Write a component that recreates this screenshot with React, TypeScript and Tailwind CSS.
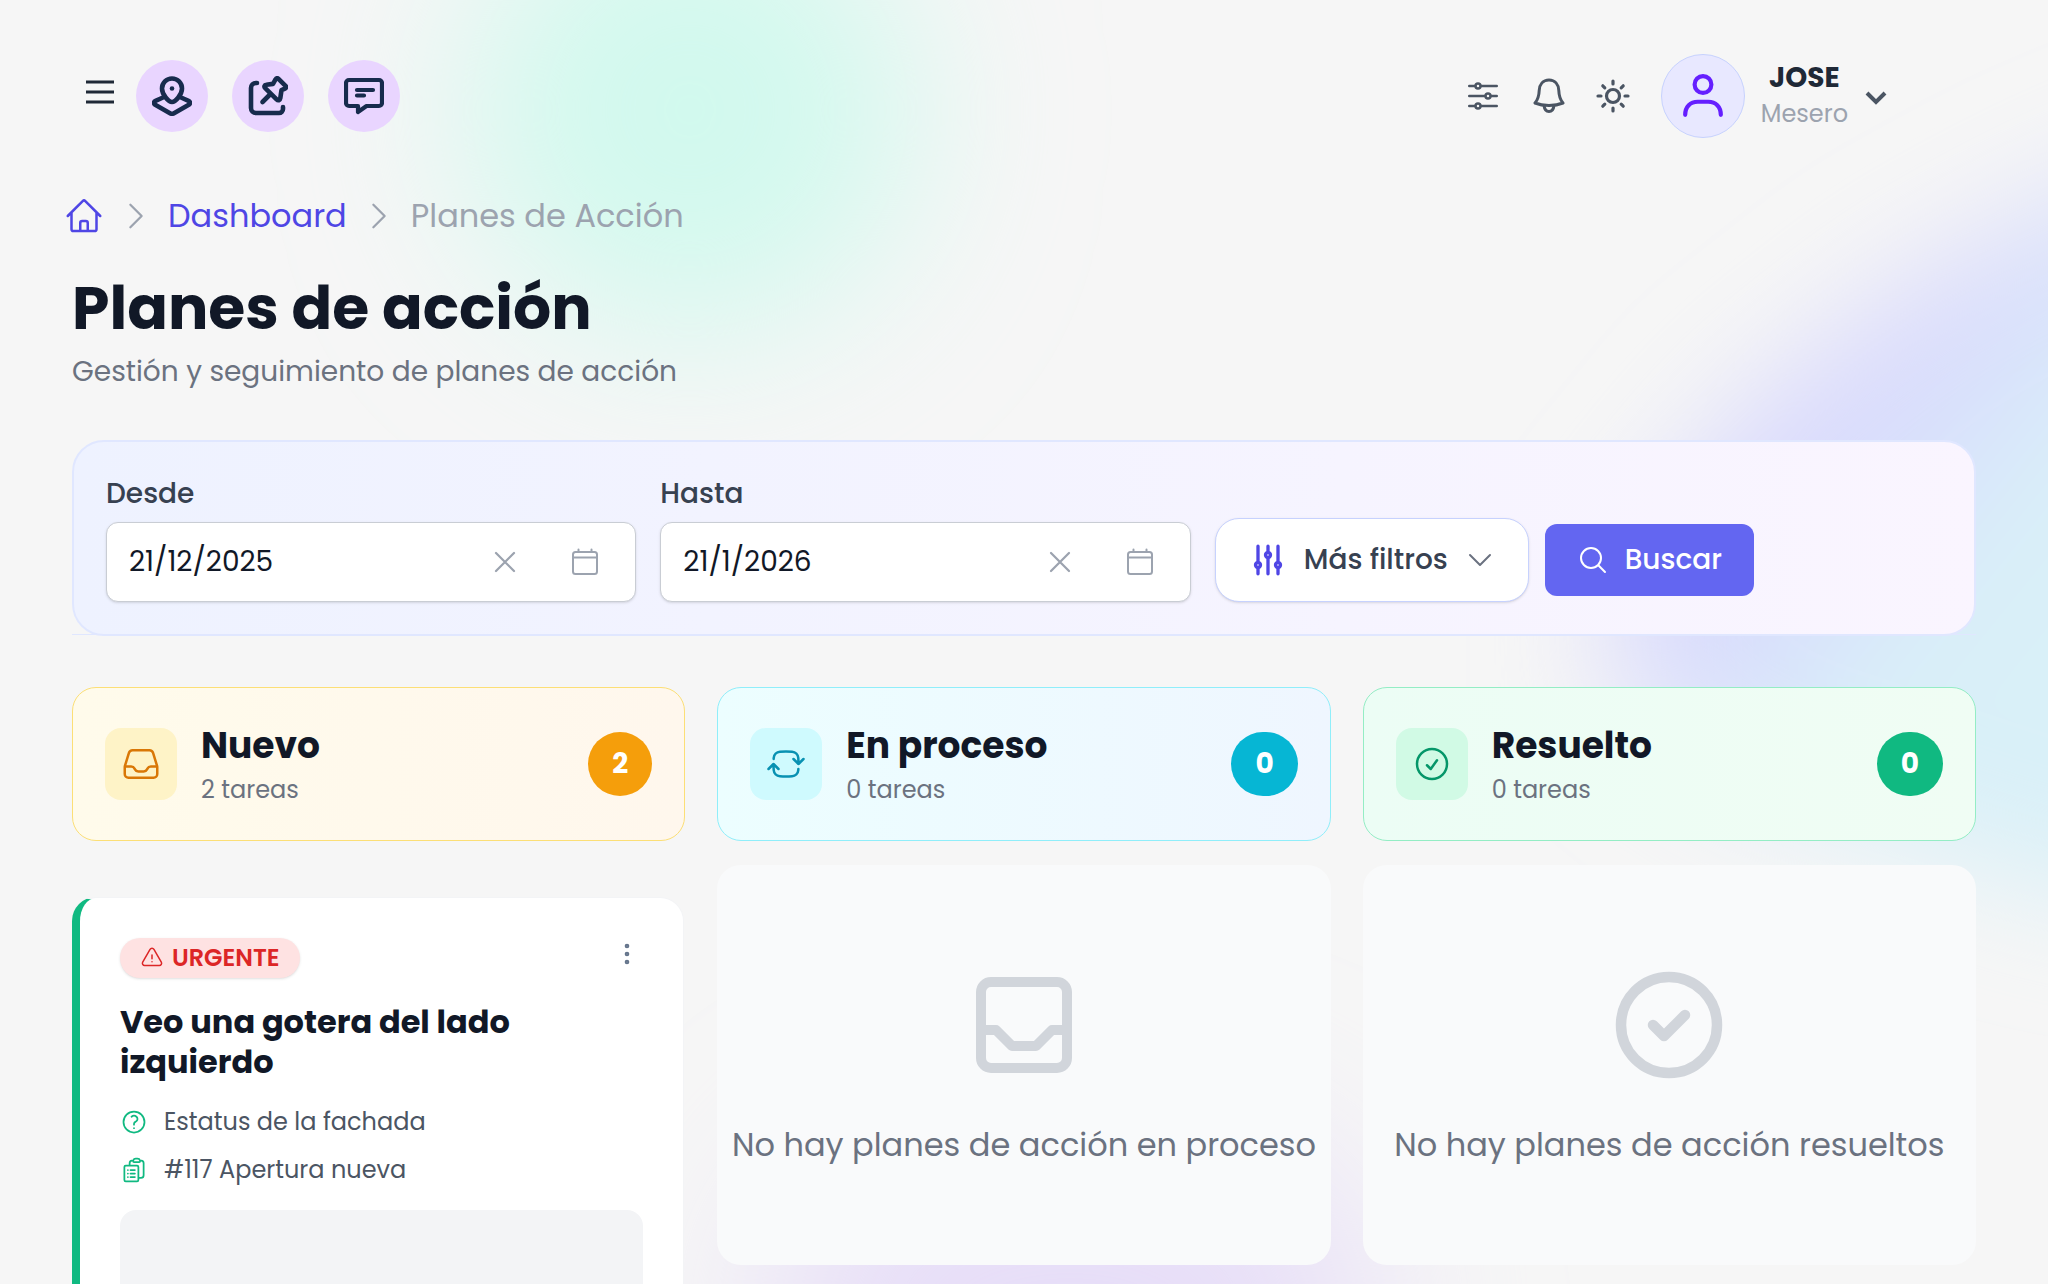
import React from 'react';
import {
    HiOutlineAdjustmentsHorizontal,
    HiOutlineAdjustmentsVertical,
    HiOutlineArrowPathRoundedSquare,
    HiOutlineCheckCircle,
    HiOutlineChevronDown,
    HiOutlineChevronRight,
    HiOutlineClipboardDocumentList,
    HiOutlineEllipsisVertical,
    HiOutlineExclamationTriangle,
    HiOutlineHome,
    HiOutlineInbox,
    HiOutlineMagnifyingGlass,
    HiOutlineQuestionMarkCircle,
    HiOutlineXMark,
} from 'react-icons/hi2';

type IconProps = { className?: string };

function MapPinIcon({ className }: IconProps) {
    return (
        <svg viewBox="0 0 40 40" fill="none" stroke="currentColor" strokeWidth="4.600" strokeLinecap="round" strokeLinejoin="round" className={className}>
            <path d="M20 26c-3.500 0-10-7.500-10-13.500a10 10 0 0 1 20 0c0 6-6.500 13.500-10 13.500z" />
            <circle cx="20" cy="12.500" r="2.300" fill="currentColor" stroke="none" />
            <path d="M11 21.500l-7.500 3.300c-1.800.8-2 2.900-.3 4L18 37.200a4 4 0 0 0 4 0l14.800-8.400c1.700-1.100 1.500-3.200-.3-4L29 21.500" />
        </svg>
    );
}

function PinNoteIcon({ className }: IconProps) {
    return (
        <svg viewBox="0 0 40 40" fill="none" stroke="currentColor" strokeWidth="4.600" strokeLinecap="round" strokeLinejoin="round" className={className}>
            <path d="M9 7H8a5 5 0 0 0-5 5v20a5 5 0 0 0 5 5h23a4 4 0 0 0 4-4v-2" />
            <path d="M30.500 2.800l7 7c1 1 .6 2.300-.6 2.800l-3.400 1.600-1.200 8c-.3 2.200-2.200 2.700-3.700 1.200L17.200 12.200c-1.400-1.400-.8-3.200 1.200-3.400l6.600-.9 2.700-4.700c.6-1.200 1.900-1.300 2.800-.4z" />
            <path d="M22 18.500l-7.500 7.500" />
        </svg>
    );
}

function MessageIcon({ className }: IconProps) {
    return (
        <svg viewBox="0 0 40 40" fill="none" stroke="currentColor" strokeWidth="4.200" strokeLinecap="round" strokeLinejoin="round" className={className}>
            <path d="M5 4h30a3 3 0 0 1 3 3v20a3 3 0 0 1-3 3H22.500L14 36v-6H5a3 3 0 0 1-3-3V7a3 3 0 0 1 3-3z" />
            <path d="M13 14h16M13 19.500h7" />
        </svg>
    );
}

function BellIcon({ className }: IconProps) {
    return (
        <svg viewBox="0 0 32 36" fill="none" stroke="currentColor" strokeWidth="3" strokeLinecap="round" strokeLinejoin="round" className={className}>
            <path d="M16 2c-6 0-9.500 4.500-9.800 10.500C6 19 5 21.500 2 25c8 3.300 20 3.300 28 0-3-3.500-4-6-4.200-12.500C25.500 6.500 22 2 16 2z" />
            <path d="M11 27.500c.5 4 2.500 6 5 6s4.500-2 5-6" />
        </svg>
    );
}

function SunIcon({ className }: IconProps) {
    return (
        <svg viewBox="0 0 36 36" fill="none" stroke="currentColor" strokeWidth="3.200" strokeLinecap="round" className={className}>
            <circle cx="18" cy="18" r="6.500" />
            <path d="M18 3v3M18 30v3M3 18h3M30 18h3M7.800 7.800l2 2M26.200 26.200l2 2M28.200 7.800l-2 2M9.800 26.200l-2 2" />
        </svg>
    );
}

function UserIcon({ className }: IconProps) {
    return (
        <svg viewBox="0 0 40 42" fill="none" stroke="currentColor" strokeWidth="4" strokeLinecap="round" className={className}>
            <circle cx="20" cy="10" r="8" />
            <path d="M3 39c0-8 5-12.500 12-12.500h10c7 0 12 4.500 12 12.500" />
        </svg>
    );
}

function CalendarIcon({ className }: IconProps) {
    return (
        <svg viewBox="0 0 28 28" fill="none" stroke="currentColor" strokeWidth="2" strokeLinecap="round" strokeLinejoin="round" className={className}>
            <rect x="2" y="4" width="24" height="22" rx="2.500" />
            <path d="M2 9.500h24M7.500 1.500V4M20.500 1.500V4" />
        </svg>
    );
}

function TrayIcon({ className }: IconProps) {
    return (
        <svg viewBox="0 0 96 96" fill="none" stroke="currentColor" strokeWidth="10" strokeLinejoin="round" className={className}>
            <rect x="5" y="5" width="86" height="86" rx="10" />
            <path d="M5 53h15l16 16h24l16-16h15" />
        </svg>
    );
}

function CheckRingIcon({ className }: IconProps) {
    return (
        <svg viewBox="0 0 108 108" fill="none" stroke="currentColor" strokeWidth="10.500" strokeLinecap="round" strokeLinejoin="round" className={className}>
            <circle cx="54" cy="54" r="48" />
            <path d="M38 54l11 11 21-21" />
        </svg>
    );
}

const shortcuts = [
    { label: 'Mapa', icon: MapPinIcon },
    { label: 'Fijar', icon: PinNoteIcon },
    { label: 'Mensajes', icon: MessageIcon },
];

const statuses = [
    {
        title: 'Nuevo',
        count: 2,
        icon: HiOutlineInbox,
        card: 'border-[#fcdf76] from-[#fffbeb] to-[#fff7ed]',
        box: 'bg-[#fef3c7] text-[#d97706]',
        badge: 'bg-[#f59e0b]',
    },
    {
        title: 'En proceso',
        count: 0,
        icon: HiOutlineArrowPathRoundedSquare,
        card: 'border-[#90eefa] from-[#ecfeff] to-[#eff6ff]',
        box: 'bg-[#cffafe] text-[#0891b2]',
        badge: 'bg-[#06b6d4]',
    },
    {
        title: 'Resuelto',
        count: 0,
        icon: HiOutlineCheckCircle,
        card: 'border-[#94edc5] from-[#ecfdf5] to-[#f0fdf4]',
        box: 'bg-[#d1fae5] text-[#059669]',
        badge: 'bg-[#10b981]',
    },
];

function StatusCard({ status }: { status: (typeof statuses)[number] }) {
    const Icon = status.icon;
    return (
        <div className={`flex items-center rounded-3xl border bg-gradient-to-r px-8 py-8.5 ${status.card}`}>
            <div className={`flex size-18 shrink-0 items-center justify-center rounded-2xl ${status.box}`}>
                <Icon className="size-10" />
            </div>
            <div className="ml-6 flex-1">
                <h2 className="text-4xl leading-12 font-bold text-[#111827]">{status.title}</h2>
                <p className="mt-1 text-2xl leading-8 text-[#6b7280]">{status.count} tareas</p>
            </div>
            <span className={`flex h-16 items-center justify-center rounded-full px-6 text-[28px] font-bold text-white ${status.badge}`}>
                {status.count}
            </span>
        </div>
    );
}

function DateField({ id, label, value }: { id: string; label: string; value: string }) {
    return (
        <div className="min-w-0 flex-1">
            <label htmlFor={id} className="mb-2 block text-[28px] leading-10 font-medium text-[#374151]">
                {label}
            </label>
            <div className="flex h-20 items-center rounded-xl border border-[#c9cdd4] bg-white pr-9 pl-5.5 text-[#9ca3af] shadow">
                <input id={id} type="text" defaultValue={value} className="min-w-0 flex-1 bg-transparent text-[28px] text-[#111827] outline-none" />
                <button type="button" aria-label={`Limpiar ${label}`} className="mr-12">
                    <HiOutlineXMark className="size-9" />
                </button>
                <button type="button" aria-label={`Calendario ${label}`}>
                    <CalendarIcon className="size-7" />
                </button>
            </div>
        </div>
    );
}

function EmptyColumn({ icon: Icon, text, size }: { icon: React.ComponentType<IconProps>; text: string; size: string }) {
    return (
        <div className="flex h-100 flex-col items-center rounded-3xl bg-[#f9fafb] pt-26">
            <div className="flex h-28 items-center text-[#d1d5db]">
                <Icon className={size} />
            </div>
            <p className="mt-10 text-[32px] leading-12 whitespace-nowrap text-[#6b7280]">{text}</p>
        </div>
    );
}

function TaskCard() {
    return (
        <article className="mt-8 mr-px rounded-3xl border border-l-8 border-[#f3f4f6] border-l-[#10b981] bg-white px-10 py-10">
            <div className="flex items-start justify-between">
                <span className="flex h-10 items-center gap-2 rounded-full bg-[#fee2e2] px-5 text-2xl font-semibold text-[#dc2626] shadow-sm">
                    <HiOutlineExclamationTriangle className="size-6" />
                    URGENTE
                </span>
                <button type="button" aria-label="Opciones" className="text-[#64748b]">
                    <HiOutlineEllipsisVertical className="size-8" strokeWidth={2} />
                </button>
            </div>
            <h3 className="mt-6 text-[32px] leading-10 font-bold text-[#111827]">Veo una gotera del lado izquierdo</h3>
            <div className="mt-6 space-y-4 text-2xl leading-8 text-[#4b5563]">
                <p className="flex items-center gap-4">
                    <HiOutlineQuestionMarkCircle className="size-7 text-[#10b981]" />
                    Estatus de la fachada
                </p>
                <p className="flex items-center gap-4">
                    <HiOutlineClipboardDocumentList className="size-7 text-[#10b981]" />
                    #117 Apertura nueva
                </p>
            </div>
            <div className="mt-6 h-80 rounded-2xl bg-[#f3f4f6]" />
        </article>
    );
}

function Backdrop() {
    return (
        <svg viewBox="0 0 2048 1284" preserveAspectRatio="none" aria-hidden="true" className="absolute inset-0 size-full">
            <defs>
                <filter id="soft" filterUnits="userSpaceOnUse" x="-200" y="-400" width="2800" height="2200">
                    <feGaussianBlur stdDeviation="85" />
                </filter>
                <filter id="softer" filterUnits="userSpaceOnUse" x="1200" y="-200" width="1400" height="1600">
                    <feGaussianBlur stdDeviation="60" />
                </filter>
                <linearGradient id="sky" gradientUnits="userSpaceOnUse" x1="1850" y1="430" x2="2010" y2="560">
                    <stop offset="0" stopColor="#d9d9fd" />
                    <stop offset="1" stopColor="#d9f0f8" />
                </linearGradient>
            </defs>
            <g filter="url(#soft)">
                <circle cx="690" cy="110" r="225" fill="#d2f9ee" />
                <ellipse cx="1070" cy="1310" rx="310" ry="200" fill="#e7def8" />
            </g>
            <path
                filter="url(#softer)"
                fill="url(#sky)"
                d="M2350 80L2048 205L1900 285L1740 410L1610 570L1610 690L1720 780L1900 840L2048 890L2350 940z"
            />
        </svg>
    );
}

export default function App() {
    return (
        <div className="relative h-screen overflow-hidden bg-[#f6f6f6] font-['Poppins','Inter',sans-serif]">
            <Backdrop />

            <div className="relative px-18 pt-13">
                {/* Header */}
                <header className="flex h-22 items-center justify-between pl-3">
                    <div className="flex items-center gap-6">
                        <button type="button" aria-label="Menú" className="-mr-1 text-[#1f2937]">
                            <svg viewBox="0 0 32 32" stroke="currentColor" strokeWidth="3" className="size-8">
                                <path d="M2 2h28M2 12h28M2 22h28" />
                            </svg>
                        </button>
                        {shortcuts.map(({ label, icon: Icon }) => (
                            <button key={label} type="button" aria-label={label} className="flex size-18 items-center justify-center rounded-full bg-[#e9d5ff] text-[#172b4d]">
                                <Icon className="size-10" />
                            </button>
                        ))}
                    </div>
                    <div className="mr-22 flex items-center gap-7.5 text-[#4b5563]">
                        <button type="button" aria-label="Ajustes">
                            <HiOutlineAdjustmentsHorizontal className="size-10" />
                        </button>
                        <button type="button" aria-label="Notificaciones">
                            <BellIcon className="h-9 w-8" />
                        </button>
                        <button type="button" aria-label="Tema">
                            <SunIcon className="size-9" />
                        </button>
                        <button type="button" className="flex items-center gap-4">
                            <span className="flex size-21 items-center justify-center rounded-full border border-[#c7d2fe] bg-[#e8e8ff] text-[#651fff]">
                                <UserIcon className="size-11" />
                            </span>
                            <span className="text-center">
                                <span className="block text-[28px] leading-9 font-bold text-[#1f2937]">JOSE</span>
                                <span className="block text-2xl leading-9 text-[#9ca3af]">Mesero</span>
                            </span>
                            <svg viewBox="0 0 24 24" fill="none" stroke="currentColor" strokeWidth="4" className="mt-1 size-6">
                                <path d="M3 7l9 9 9-9" />
                            </svg>
                        </button>
                    </div>
                </header>

                {/* Breadcrumb */}
                <nav aria-label="Breadcrumb" className="-ml-2 mt-13 flex h-12 items-center gap-3.5 text-[32px] text-[#9ca3af]">
                    <a href="#" aria-label="Inicio" className="text-[#4f46e5]">
                        <HiOutlineHome className="size-10" />
                    </a>
                    <HiOutlineChevronRight className="size-9" />
                    <a href="#" className="text-[#4f46e5]">
                        Dashboard
                    </a>
                    <HiOutlineChevronRight className="size-9" />
                    <span>Planes de Acción</span>
                </nav>

                <h1 className="mt-8 text-[60px] leading-18 font-bold text-[#111827]">Planes de acción</h1>
                <p className="mt-2 text-[28px] leading-10 text-[#6b7280]">Gestión y seguimiento de planes de acción</p>

                {/* Filters */}
                <div className="mt-12 border-b border-[#e0e7ff]">
                    <form
                        onSubmit={(e) => e.preventDefault()}
                        className="-mb-0.5 flex items-end gap-6 rounded-[32px] border-2 border-[#e0e7ff] bg-gradient-to-r from-[#eef2ff] to-[#faf5ff] p-8"
                    >
                        <DateField id="desde" label="Desde" value="21/12/2025" />
                        <DateField id="hasta" label="Hasta" value="21/1/2026" />
                        <div className="flex shrink-0 items-center gap-4 pr-47">
                            <button type="button" className="flex h-21 items-center gap-4 rounded-3xl border border-[#c7d2fe] bg-white px-8 text-[28px] font-medium text-[#374151] shadow-sm">
                                <HiOutlineAdjustmentsVertical className="size-10 text-[#4f46e5]" strokeWidth={2} />
                                Más filtros
                                <HiOutlineChevronDown className="size-8 text-[#6b7280]" />
                            </button>
                            <button type="submit" className="flex h-18 items-center gap-4 rounded-xl bg-[#6366f1] px-8 text-[28px] font-medium text-white">
                                <HiOutlineMagnifyingGlass className="size-8" />
                                Buscar
                            </button>
                        </div>
                    </form>
                </div>

                {/* Board */}
                <main className="mt-13 grid grid-cols-3 gap-8">
                    <section className="flex flex-col gap-6">
                        <StatusCard status={statuses[0]} />
                        <TaskCard />
                    </section>
                    <section className="flex flex-col gap-6">
                        <StatusCard status={statuses[1]} />
                        <EmptyColumn icon={TrayIcon} size="size-24" text="No hay planes de acción en proceso" />
                    </section>
                    <section className="flex flex-col gap-6">
                        <StatusCard status={statuses[2]} />
                        <EmptyColumn icon={CheckRingIcon} size="size-27" text="No hay planes de acción resueltos" />
                    </section>
                </main>
            </div>
        </div>
    );
}
